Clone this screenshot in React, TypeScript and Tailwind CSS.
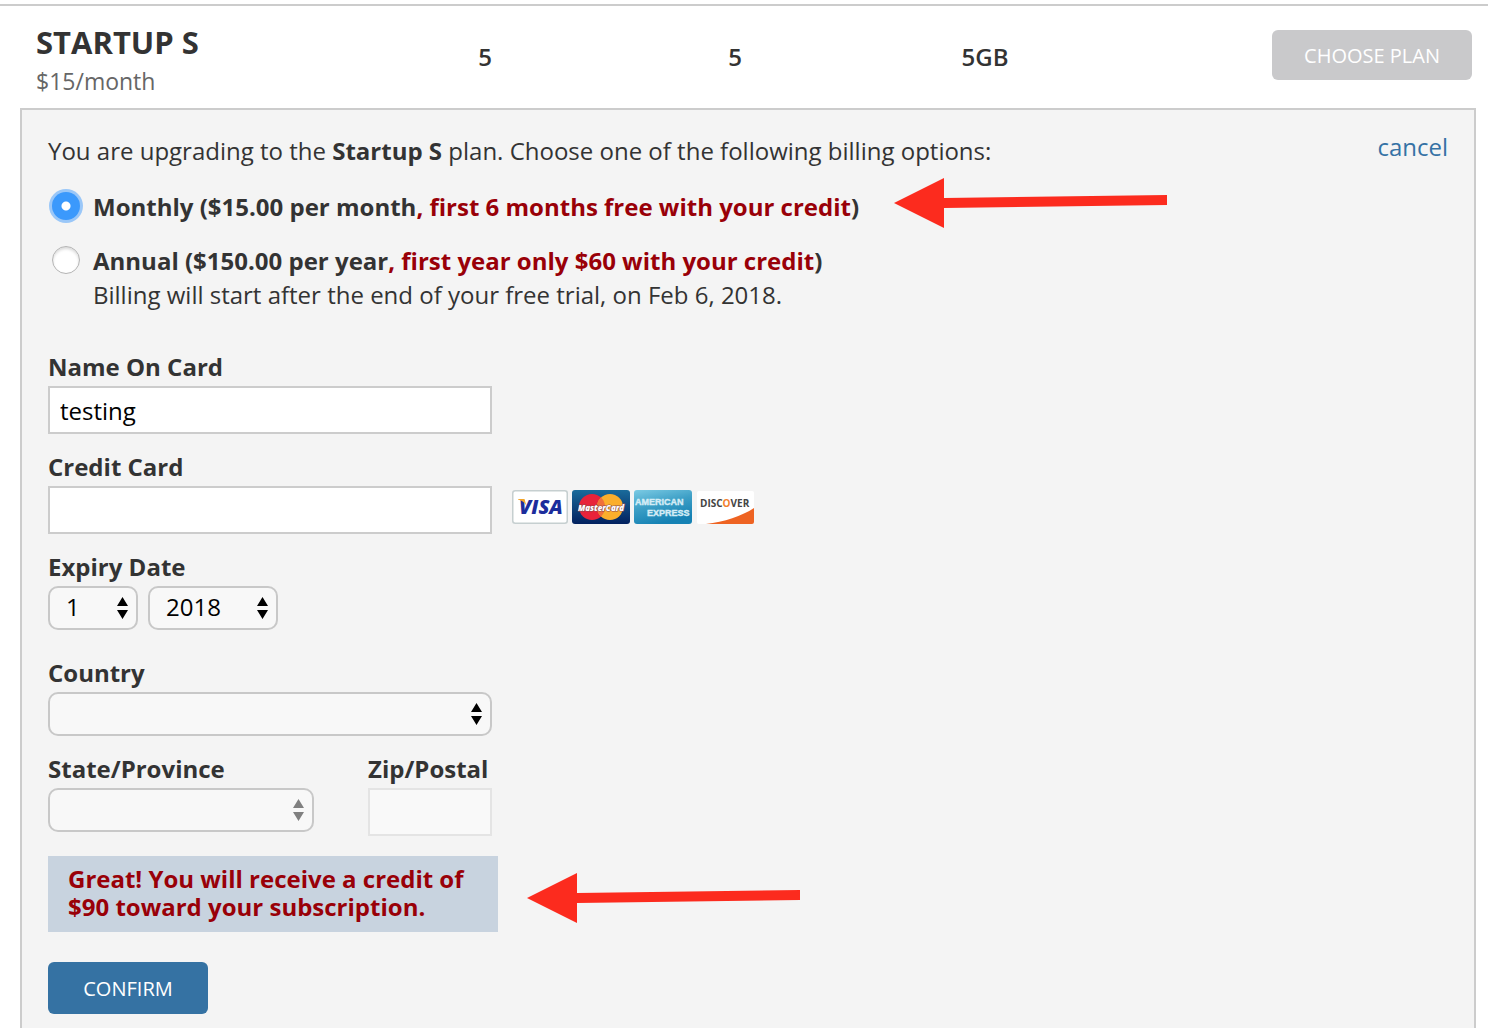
import { useState, type ReactNode } from "react";

function SortArrows({ className }: { className: string }) {
  return (
    <svg viewBox="0 0 11 22" width="11" height="22" aria-hidden="true" className={className}>
      <path d="M5.5 0 11 9H0ZM5.5 22 11 13H0Z" fill="currentColor" />
    </svg>
  );
}

function SelectField({
  id,
  label,
  value,
  options,
  className,
  disabled = false,
}: {
  id: string;
  label?: string;
  value: string;
  options: string[];
  className: string;
  disabled?: boolean;
}) {
  return (
    <div className={`relative ${className}`}>
      <select
        id={id}
        aria-label={label}
        defaultValue={value}
        disabled={disabled}
        className="block h-11 w-full appearance-none rounded-[10px] border-2 border-[#c8c8c8] bg-[#f8f8f8] pr-8 pl-4 pb-0.5 leading-9 text-black"
      >
        {options.map((o) => (
          <option key={o} value={o}>
            {o}
          </option>
        ))}
      </select>
      <SortArrows
        className={`pointer-events-none absolute top-[11px] right-[10px] ${disabled ? "text-[#808080]" : "text-black"}`}
      />
    </div>
  );
}

function FieldLabel({ htmlFor, children }: { htmlFor: string; children: ReactNode }) {
  return (
    <label htmlFor={htmlFor} className="mb-1.5 block leading-[26px] font-bold">
      {children}
    </label>
  );
}

function RedArrow({ className }: { className: string }) {
  return (
    <svg viewBox="0 0 273 50" width="273" height="50" aria-hidden="true" className={`absolute ${className}`}>
      <path d="M0 25 50 0V20L273 17V27L50 30V50Z" fill="#fc2b1e" />
    </svg>
  );
}

function CardLogos() {
  return (
    <div className="flex gap-1" role="img" aria-label="Visa, MasterCard, American Express, Discover">
      <svg viewBox="0 0 56 34" width="56" height="34">
        <rect x="0.75" y="0.75" width="54.5" height="32.5" rx="2.5" fill="#fff" stroke="#c6cfd0" strokeWidth="1.5" />
        <text x="7" y="24" fontFamily="Open Sans, sans-serif" fontSize="20" fontWeight="800" fontStyle="italic" fill="#1c2d9c">
          VISA
        </text>
        <path d="M6 9h6.500l2 7C12.500 12 10 10.500 6 9.500Z" fill="#f2a52a" />
      </svg>
      <svg viewBox="0 0 58 34" width="58" height="34">
        <defs>
          <linearGradient id="mc" x1="0" y1="0" x2="0" y2="1">
            <stop offset="0" stopColor="#1a6b9b" />
            <stop offset="1" stopColor="#02215f" />
          </linearGradient>
        </defs>
        <rect width="58" height="34" rx="3" fill="url(#mc)" />
        <circle cx="20" cy="17" r="13" fill="#e8233a" />
        <circle cx="38" cy="17" r="13" fill="#fbae2c" />
        <path d="M29 7.600a13 13 0 0 1 0 18.800a13 13 0 0 1 0-18.800Z" fill="#f0703a" />
        <text x="29" y="21" textAnchor="middle" fontFamily="Open Sans, sans-serif" fontSize="8" fontWeight="800" fontStyle="italic" fill="#fff" stroke="#8c4a50" strokeWidth="1" paintOrder="stroke">
          MasterCard
        </text>
      </svg>
      <svg viewBox="0 0 58 34" width="58" height="34">
        <defs>
          <linearGradient id="amex" x1="0" y1="0" x2="0.4" y2="1">
            <stop offset="0" stopColor="#7ccbe4" />
            <stop offset="0.5" stopColor="#3d9fc6" />
            <stop offset="1" stopColor="#1682b4" />
          </linearGradient>
        </defs>
        <rect width="58" height="34" rx="3" fill="url(#amex)" />
        <text x="1" y="15" fontFamily="Liberation Sans, sans-serif" fontSize="9" fontWeight="700" fill="#d5edf6" stroke="#d5edf6" strokeWidth="0.4">
          AMERICAN
        </text>
        <text x="13" y="26" fontFamily="Liberation Sans, sans-serif" fontSize="9" fontWeight="700" fill="#d5edf6" stroke="#d5edf6" strokeWidth="0.4">
          EXPRESS
        </text>
      </svg>
      <svg viewBox="0 0 58 34" width="58" height="34">
        <rect x="1" y="1" width="57" height="33" rx="2" fill="#fff" />
        <path d="M58 18V32a2 2 0 0 1-2 2H10C28 32 46 26 58 18Z" fill="#ee6322" />
        <text x="4" y="17" fontFamily="Open Sans, sans-serif" fontSize="10" fontWeight="700" fill="#444">
          DISC<tspan fill="#f2802c">O</tspan>VER
        </text>
      </svg>
    </div>
  );
}

function BillingOption({
  id,
  checked,
  onSelect,
  children,
}: {
  id: string;
  checked: boolean;
  onSelect: () => void;
  children: ReactNode;
}) {
  return (
    <div className="flex items-start gap-[13px] pl-1">
      <input
        id={id}
        type="radio"
        name="billing"
        checked={checked}
        onChange={onSelect}
        className="mt-0.5 size-7 shrink-0 appearance-none rounded-full border border-[#b4b4b4] bg-white shadow-[inset_0_2px_3px_rgba(0,0,0,0.15)] checked:border-0 checked:bg-[radial-gradient(circle,#fff_4px,#3b99fc_5px)] checked:shadow-[0_0_0_3px_#9ac7f8]"
      />
      <label htmlFor={id} className="leading-[34px]">
        {children}
      </label>
    </div>
  );
}

const textInput = "block h-12 border-2 border-[#ccc] bg-white px-[10px] text-black";
const months = ["1", "2", "3", "4", "5", "6", "7", "8", "9", "10", "11", "12"];
const years = ["2018", "2019", "2020", "2021", "2022"];

export default function App() {
  const [billing, setBilling] = useState("monthly");

  return (
    <div className="flex h-screen flex-col overflow-hidden bg-white pt-1 font-['Open_Sans',sans-serif] text-[24px] text-[#333]">
      <header className="grid shrink-0 grid-cols-[324fr_250fr_250fr_250fr_362fr] items-start border-t-2 border-[#ccc] pt-4 pr-4 pb-2 pl-9">
        <div>
          <h1 className="text-[31px] leading-10 font-bold">STARTUP S</h1>
          <p className="text-[23px] leading-[38px] text-[#666]">$15/month</p>
        </div>
        <div className="mt-4 text-center leading-[38px] font-semibold">5</div>
        <div className="mt-4 text-center leading-[38px] font-semibold">5</div>
        <div className="mt-4 text-center leading-[38px] font-semibold">5GB</div>
        <button
          type="button"
          disabled
          className="mt-2 h-[50px] w-[200px] justify-self-end rounded-md bg-[#c9c9cb] pt-0.5 text-[20px] leading-7 text-white"
        >
          CHOOSE PLAN
        </button>
      </header>

      <main className="mr-3 ml-5 flex-1 border-2 border-b-0 border-[#ccc] bg-[#f4f4f4] px-[26px] pt-6">
        <div className="flex items-start justify-between leading-[34px]">
          <p>
            You are upgrading to the <b>Startup S</b> plan. Choose one of the following billing options:
          </p>
          <a href="#cancel" className="-mt-1 text-[#3572a5]">
            cancel
          </a>
        </div>

        <form onSubmit={(e) => e.preventDefault()}>
          <fieldset aria-label="Billing options" className="relative mt-[22px] flex flex-col gap-5">
            <BillingOption id="monthly" checked={billing === "monthly"} onSelect={() => setBilling("monthly")}>
              <b>
                Monthly ($15.00 per month<span className="text-[#990008]">, first 6 months free with your credit</span>)
              </b>
            </BillingOption>
            <BillingOption id="annual" checked={billing === "annual"} onSelect={() => setBilling("annual")}>
              <b>
                Annual ($150.00 per year<span className="text-[#990008]">, first year only $60 with your credit</span>)
              </b>
              <br />
              Billing will start after the end of your free trial, on Feb 6, 2018.
            </BillingOption>
            <RedArrow className="-top-3 left-[846px]" />
          </fieldset>

          <div className="mt-[42px]">
            <FieldLabel htmlFor="name">Name On Card</FieldLabel>
            <input id="name" type="text" defaultValue="testing" className={`${textInput} w-[444px]`} />
          </div>

          <div className="mt-5">
            <FieldLabel htmlFor="card">Credit Card</FieldLabel>
            <div className="flex items-start gap-5">
              <input id="card" type="text" className={`${textInput} w-[444px]`} />
              <div className="pt-1">
                <CardLogos />
              </div>
            </div>
          </div>

          <div className="mt-5">
            <FieldLabel htmlFor="month">Expiry Date</FieldLabel>
            <div className="flex gap-[10px]">
              <SelectField id="month" value="1" options={months} className="w-[90px]" />
              <SelectField id="year" label="Expiry year" value="2018" options={years} className="w-[130px]" />
            </div>
          </div>

          <div className="mt-[30px]">
            <FieldLabel htmlFor="country">Country</FieldLabel>
            <SelectField id="country" value="" options={[""]} className="w-[444px]" />
          </div>

          <div className="mt-5 flex gap-[54px]">
            <div>
              <FieldLabel htmlFor="state">State/Province</FieldLabel>
              <SelectField id="state" value="" options={[""]} className="w-[266px]" disabled />
            </div>
            <div>
              <FieldLabel htmlFor="zip">Zip/Postal</FieldLabel>
              <input
                id="zip"
                type="text"
                disabled
                className="block h-12 w-[124px] border-2 border-[#e4e4e4] bg-[#f9f9f9] px-[10px]"
              />
            </div>
          </div>

          <div className="relative mt-5">
            <p className="w-[450px] bg-[#c8d3df] px-5 pt-[9px] pb-[11px] leading-7 font-bold text-[#990008]">
              Great! You will receive a credit of $90 toward your subscription.
            </p>
            <RedArrow className="top-[17px] left-[479px]" />
          </div>

          <button
            type="submit"
            className="mt-[30px] block h-[52px] w-[160px] rounded-md bg-[#3572a3] pt-0.5 text-[20px] leading-7 text-white"
          >
            CONFIRM
          </button>
        </form>
      </main>
    </div>
  );
}
